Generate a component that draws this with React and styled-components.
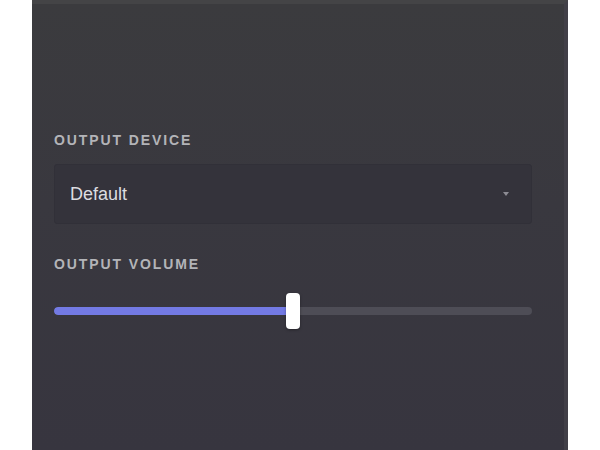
import React from "react";
import styled, { createGlobalStyle } from "styled-components";

const GlobalStyle = createGlobalStyle`
  html, body {
    margin: 0;
    padding: 0;
    background: #ffffff;
  }
  body {
    font-family: "Liberation Sans", Arial, sans-serif;
  }
`;

const Page = styled.div`
  width: 600px;
  height: 450px;
  display: flex;
  padding-left: 32px;
  box-sizing: border-box;
`;

const Panel = styled.div`
  width: 536px;
  height: 450px;
  box-sizing: border-box;
  border-top: 4px solid #444446;
  border-right: 4px solid #413f47;
  background: linear-gradient(180deg, #3b3b3e 0%, #39383f 45%, #37353f 100%);
  padding: 128px 32px 0 22px;
  display: flex;
  flex-direction: column;
`;

const Label = styled.div`
  font-size: 14px;
  line-height: 17px;
  font-weight: 700;
  letter-spacing: 1.9px;
  text-transform: uppercase;
  color: #b3b4b8;
  margin-top: ${(p) => p.$gap || 0}px;
`;

const Select = styled.div`
  margin-top: 15px;
  height: 60px;
  background: #34333b;
  border: 1px solid #313038;
  border-radius: 3px;
  display: flex;
  align-items: center;
  justify-content: space-between;
  padding: 0 22px 0 15px;
  box-sizing: border-box;
  font-size: 18px;
  color: #dcdde0;
`;

const Caret = styled.span`
  width: 0;
  height: 0;
  border-left: 3px solid transparent;
  border-right: 3px solid transparent;
  border-top: 4px solid #8d8c94;
`;

const Slider = styled.div`
  position: relative;
  margin-top: 20px;
  height: 36px;
  display: flex;
  align-items: center;
`;

const Track = styled.div`
  flex: 1;
  height: 8px;
  border-radius: 4px;
  background: #4e4d56;
  overflow: hidden;
`;

const Fill = styled.div`
  height: 100%;
  background: #737ae4;
  border-radius: 4px 0 0 4px;
`;

const Handle = styled.div`
  position: absolute;
  top: 0;
  width: 14px;
  height: 36px;
  margin-left: -7px;
  border-radius: 4px;
  background: #ffffff;
  box-shadow: 0 1px 3px rgba(0, 0, 0, 0.35);
`;

const OutputSettings = ({ device, volume }) => (
  <Panel>
    <Label>Output Device</Label>
    <Select>
      <span>{device}</span>
      <Caret />
    </Select>
    <Label $gap={32}>Output Volume</Label>
    <Slider>
      <Track>
        <Fill style={{ width: `${volume}%` }} />
      </Track>
      <Handle style={{ left: `${volume}%` }} />
    </Slider>
  </Panel>
);

export default function App() {
  return (
    <>
      <GlobalStyle />
      <Page>
        <OutputSettings device="Default" volume={50} />
      </Page>
    </>
  );
}
